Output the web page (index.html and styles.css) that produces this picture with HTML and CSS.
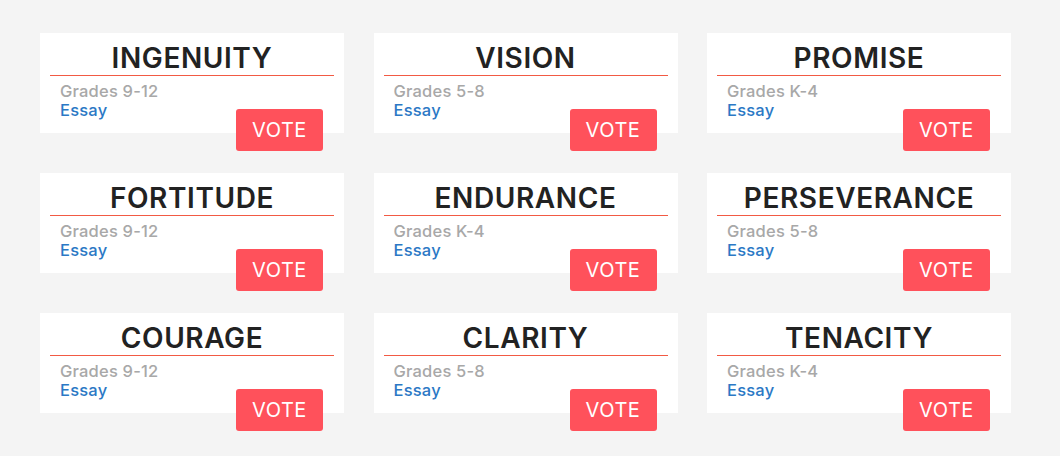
FILE: index.html
```html
<!DOCTYPE html>
<html lang="en">
<head>
  <meta charset="UTF-8" />
  <title>Vote</title>
  <link rel="stylesheet" href="styles.css">
</head>
<body>
  <div class="grid">
    <div class="card">
      <h2>INGENUITY</h2>
      <div class="card-body">
        <div class="info"><div class="grade">Grades 9-12</div><div class="type">Essay</div></div>
        <button class="vote">VOTE</button>
      </div>
    </div>
    <div class="card">
      <h2>VISION</h2>
      <div class="card-body">
        <div class="info"><div class="grade">Grades 5-8</div><div class="type">Essay</div></div>
        <button class="vote">VOTE</button>
      </div>
    </div>
    <div class="card">
      <h2>PROMISE</h2>
      <div class="card-body">
        <div class="info"><div class="grade">Grades K-4</div><div class="type">Essay</div></div>
        <button class="vote">VOTE</button>
      </div>
    </div>
    <div class="card">
      <h2>FORTITUDE</h2>
      <div class="card-body">
        <div class="info"><div class="grade">Grades 9-12</div><div class="type">Essay</div></div>
        <button class="vote">VOTE</button>
      </div>
    </div>
    <div class="card">
      <h2>ENDURANCE</h2>
      <div class="card-body">
        <div class="info"><div class="grade">Grades K-4</div><div class="type">Essay</div></div>
        <button class="vote">VOTE</button>
      </div>
    </div>
    <div class="card">
      <h2>PERSEVERANCE</h2>
      <div class="card-body">
        <div class="info"><div class="grade">Grades 5-8</div><div class="type">Essay</div></div>
        <button class="vote">VOTE</button>
      </div>
    </div>
    <div class="card">
      <h2>COURAGE</h2>
      <div class="card-body">
        <div class="info"><div class="grade">Grades 9-12</div><div class="type">Essay</div></div>
        <button class="vote">VOTE</button>
      </div>
    </div>
    <div class="card">
      <h2>CLARITY</h2>
      <div class="card-body">
        <div class="info"><div class="grade">Grades 5-8</div><div class="type">Essay</div></div>
        <button class="vote">VOTE</button>
      </div>
    </div>
    <div class="card">
      <h2>TENACITY</h2>
      <div class="card-body">
        <div class="info"><div class="grade">Grades K-4</div><div class="type">Essay</div></div>
        <button class="vote">VOTE</button>
      </div>
    </div>
  </div>
</body>
</html>
```

FILE: styles.css
```css
body {
  margin: 0;
  background-color: #f4f4f4;
  font-family: 'Inter', 'Liberation Sans', sans-serif;
}

.grid {
  display: grid;
  grid-template-columns: repeat(3, 304px);
  column-gap: 29.5px;
  row-gap: 40px;
  padding: 33px 0 44px 40px;
}

.card {
  background-color: #fff;
  height: 100px;
  padding: 0 10px;
}

.card h2 {
  margin: 0;
  padding-top: 8px;
  height: 34px;
  line-height: 34px;
  font-size: 28px;
  font-weight: 600;
  letter-spacing: 0.6px;
  color: #222;
  text-align: center;
  border-bottom: 1px solid #f25a44;
}

.card-body {
  display: flex;
  justify-content: space-between;
  padding: 0 11px 0 10px;
}

.info {
  padding-top: 6px;
  font-size: 16.5px;
  line-height: 19px;
  font-weight: 500;
  letter-spacing: 0.2px;
}

.grade {
  color: #a8a8a8;
}

.type {
  color: #2b78c5;
}

.vote {
  margin-top: 33px;
  width: 87px;
  height: 42px;
  border: none;
  border-radius: 3px;
  background-color: #ff515b;
  color: #fff;
  font-family: inherit;
  font-size: 20px;
  letter-spacing: 0.5px;
  cursor: pointer;
}
```
